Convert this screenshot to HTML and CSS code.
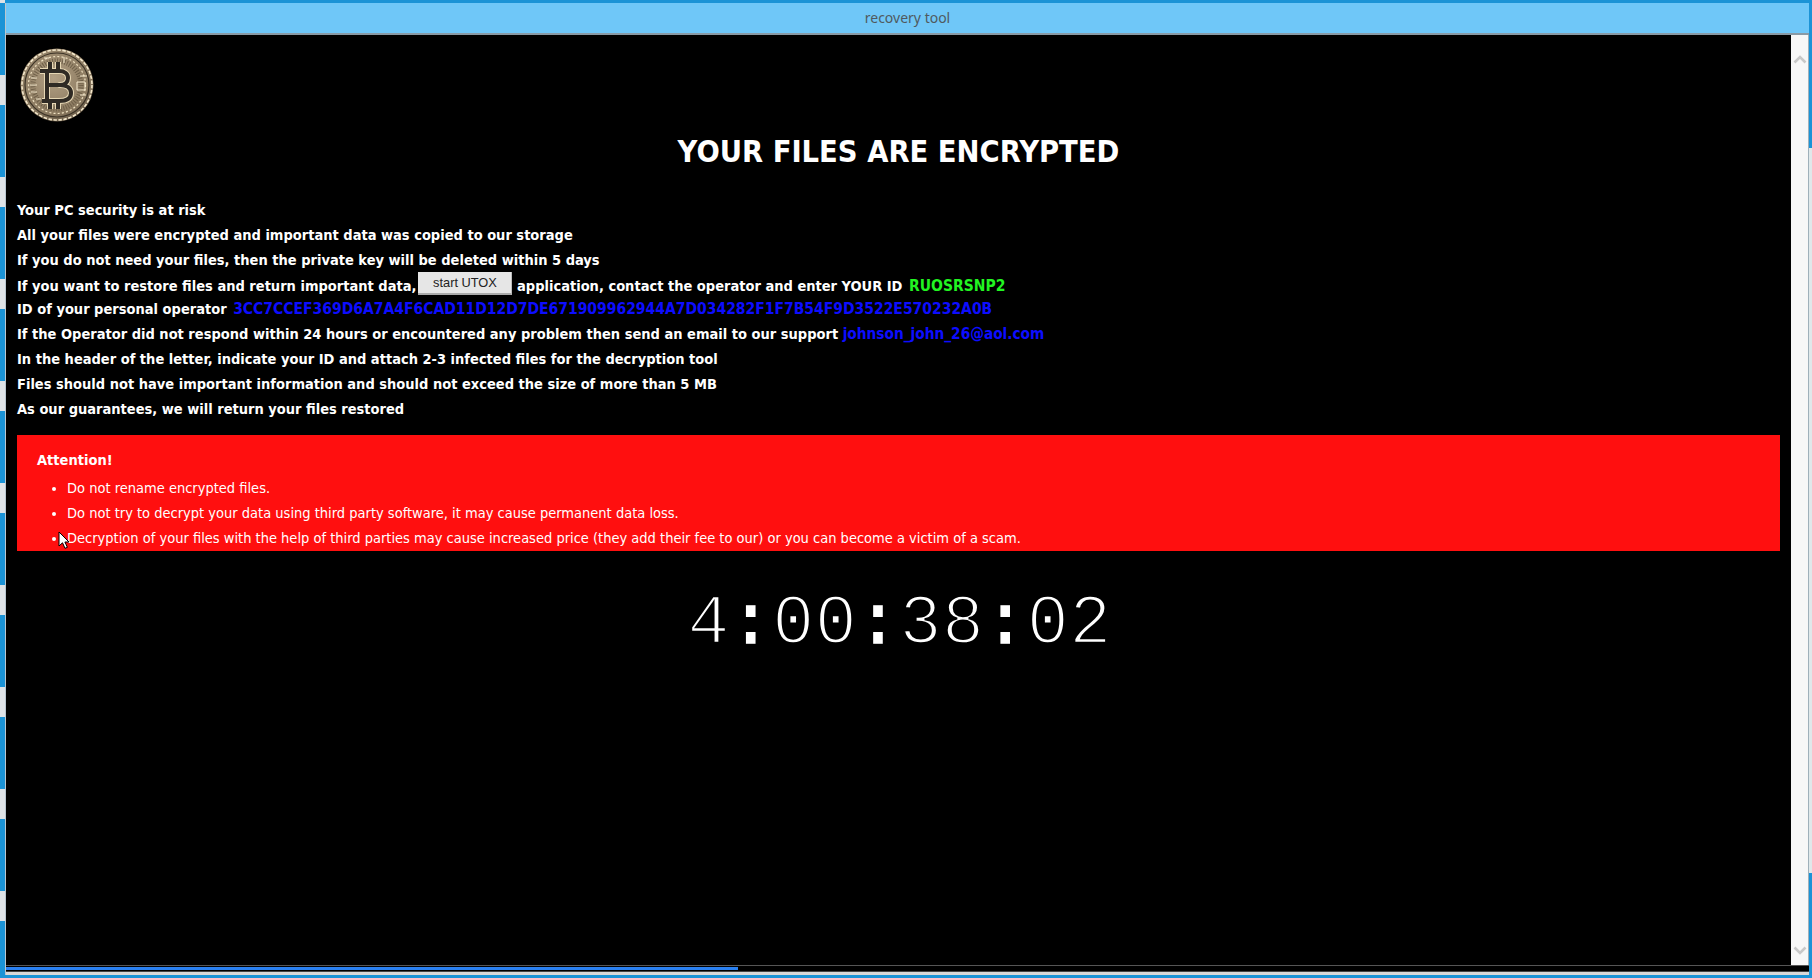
FILE: index.html
```html
<!DOCTYPE html>
<html lang="en">
<head>
<meta charset="utf-8">
<title>recovery tool</title>
<link rel="stylesheet" href="styles.css">
</head>
<body>
<div class="window">
  <header class="titlebar">recovery tool</header>
  <div class="client">
    <main class="content">
      <svg class="coin" width="74" height="74" viewBox="0 0 74 74" aria-hidden="true">
        <defs>
          <radialGradient id="coinfill" cx="45%" cy="40%" r="65%">
            <stop offset="0" stop-color="#b3a084"/>
            <stop offset="0.75" stop-color="#8b7a60"/>
            <stop offset="1" stop-color="#5d5040"/>
          </radialGradient>
        </defs>
        <circle cx="37" cy="37" r="36.500" fill="url(#coinfill)"/>
        <circle cx="37" cy="37" r="35" fill="none" stroke="#f4e8cc" stroke-width="1.600" stroke-dasharray="3.500 1.500"/>
        <circle cx="37" cy="37" r="32" fill="none" stroke="#3d3427" stroke-width="1.200"/>
        <circle cx="37" cy="37" r="28.500" fill="none" stroke="#f0e2c2" stroke-width="1.200" stroke-dasharray="2 2.200"/>
        <circle cx="37" cy="37" r="24" fill="none" stroke="#6f6049" stroke-width="5" stroke-dasharray="1 1.500"/>
        <g stroke="#e6d7b4" stroke-width="6" fill="none" stroke-linejoin="round">
          <path d="M30 14v9M38 14v9M30 53v8M38 53v8"/>
          <path d="M20 23h19c6 0 9 3 9 7s-3 7-8 7c7 0 11 3 11 8s-4 8-12 8H22"/>
          <path d="M27 23v30"/>
        </g>
        <g stroke="#2f2a24" stroke-width="4" fill="none">
          <path d="M30 14v9M38 14v9M30 53v8M38 53v8"/>
          <path d="M20 23h19c6 0 9 3 9 7s-3 7-8 7c7 0 11 3 11 8s-4 8-12 8H22"/>
          <path d="M27 23v30M27 37h13"/>
        </g>
        <g stroke="#f4e8cc" stroke-width="1" fill="none">
          <path d="M57 34h8v8h-8zM60 28h7M60 47h6M24 10h5M44 9v6"/>
          <path d="M11 30h6M10 37h7M11 44h6M16 51h5"/>
        </g>
      </svg>
      <h1 class="headline">YOUR FILES ARE ENCRYPTED</h1>
      <div class="message">
        <p class="line">Your PC security is at risk</p>
        <p class="line">All your files were encrypted and important data was copied to our storage</p>
        <p class="line">If you do not need your files, then the private key will be deleted within 5 days</p>
        <p class="line line-button">If you want to restore files and return important data,<button class="start" type="button">start UTOX</button> application, contact the operator and enter YOUR ID <span class="green">RUOSRSNP2</span></p>
        <p class="line">ID of your personal operator <span class="hex">3CC7CCEF369D6A7A4F6CAD11D12D7DE671909962944A7D034282F1F7B54F9D3522E570232A0B</span></p>
        <p class="line">If the Operator did not respond within 24 hours or encountered any problem then send an email to our support <span class="mail">johnson_john_26@aol.com</span></p>
        <p class="line">In the header of the letter, indicate your ID and attach 2-3 infected files for the decryption tool</p>
        <p class="line">Files should not have important information and should not exceed the size of more than 5 MB</p>
        <p class="line">As our guarantees, we will return your files restored</p>
      </div>
      <section class="attention">
        <h2 class="attention-title">Attention!</h2>
        <ul class="rules">
          <li>Do not rename encrypted files.</li>
          <li>Do not try to decrypt your data using third party software, it may cause permanent data loss.</li>
          <li>Decryption of your files with the help of third parties may cause increased price (they add their fee to our) or you can become a victim of a scam.</li>
        </ul>
        <svg class="cursor" width="12" height="18" viewBox="0 0 12 18" aria-hidden="true"><path d="M1 1v14l3.500-3.200 2.500 5.500 2.400-1-2.500-5.300H11z" fill="#fff" stroke="#000"/></svg>
      </section>
      <div class="timer">4<span class="sep">:</span>00<span class="sep">:</span>38<span class="sep">:</span>02</div>
    </main>
    <aside class="vscroll">
      <svg width="14" height="10" viewBox="0 0 14 10" aria-hidden="true"><path d="M1.500 8.500L7 3l5.500 5.500" fill="none" stroke="#c8c8c8" stroke-width="2.600"/></svg>
      <svg width="14" height="10" viewBox="0 0 14 10" aria-hidden="true"><path d="M1.500 1.500L7 7l5.500-5.500" fill="none" stroke="#c8c8c8" stroke-width="2.600"/></svg>
    </aside>
  </div>
  <div class="hscroll"><div class="hthumb"></div></div>
</div>
</body>
</html>
```
FILE: styles.css
```css
* { box-sizing: border-box; }
html, body { margin: 0; height: 100%; }
body {
  overflow: hidden;
  background-color: #1b93d6;
  background-image:
    linear-gradient(#1b93d6 0 40px, #dfe3e6 40px 70px, #1b93d6 70px),
    linear-gradient(#1b93d6 0 148px, #dfe8ea 148px 873px, #1b93d6 873px);
  background-size: 5px 102px, 3px 100%;
  background-position: 0 35px, 100% 0;
  background-repeat: repeat-y, no-repeat;
}
.window {
  height: 972px;
  margin: 3px 3px 0 5px;
  display: flex;
  flex-direction: column;
  background: #000;
  border-left: 1px solid #b9c6cf;
}
.titlebar {
  height: 32px;
  flex: none;
  background: #6fc7f8;
  border-bottom: 2px solid #8a9aa5;
  color: #505a60;
  font: 14px/30px "Noto Sans", sans-serif;
  text-align: center;
}
.client { flex: 1; min-height: 0; display: flex; }
.content {
  flex: 1;
  min-width: 0;
  background: #000;
  color: #fff;
  padding: 13px 11px 0 11px;
  font-family: "DejaVu Sans", "Noto Sans", sans-serif;
  font-stretch: condensed;
}
.coin { display: block; margin: 0 0 0 3px; }
.headline {
  margin: 10px 0 0;
  font-size: 30.500px;
  line-height: 40px;
  font-weight: 700;
  text-align: center;
}
.message { margin-top: 26px; }
.line {
  margin: 0;
  height: 25px;
  font-size: 14.500px;
  line-height: 25px;
  font-weight: 700;
  white-space: nowrap;
}
.line-button { margin-top: -1px; }
.start {
  display: inline-block;
  width: 94px;
  height: 23px;
  margin: 0 0 0 2px;
  padding: 0;
  vertical-align: 4px;
  background: #e6e6e6;
  border: none;
  border-right: 1px solid #bbb;
  border-bottom: 2px solid #aaa;
  color: #222;
  font: 12.800px/21px "Liberation Sans", sans-serif;
  font-stretch: normal;
}
.green { color: #22f522; font-size: 15.500px; margin-left: 2px; }
.hex { color: #0d0dff; font-size: 15.500px; margin-left: 2px; }
.mail { color: #0d0dff; font-size: 15.250px; }
.attention {
  position: relative;
  margin-top: 13px;
  height: 116px;
  background: #ff0f0f;
  padding: 13px 20px 0;
  overflow: hidden;
}
.attention-title { margin: 0; font-size: 14.500px; line-height: 25px; font-weight: 700; }
.rules { margin: 3px 0 0; padding: 0 0 0 30px; list-style: disc; }
.rules li { font-size: 14.500px; line-height: 25px; white-space: nowrap; }
.cursor { position: absolute; left: 41px; top: 96px; }
.timer {
  margin-top: 28px;
  padding-left: 2px;
  font: 70px/92px "Liberation Mono", monospace;
  font-stretch: normal;
  letter-spacing: 0.400px;
  text-align: center;
  -webkit-text-stroke: 2.400px #000;
}
.sep { -webkit-text-stroke: 1.500px #fff; }
.vscroll {
  width: 18px;
  flex: none;
  background: #f7f7f7;
  border-right: 1px solid #9fb0ba;
  display: flex;
  flex-direction: column;
  justify-content: space-between;
  align-items: center;
  padding: 19px 0 9px;
}
.hscroll {
  height: 10px;
  flex: none;
  background: linear-gradient(#000 0 5px, #444 5px 6px, #000 6px);
  border-top: 1px solid #555;
  border-bottom: 3px solid #d8d8d8;
}
.hthumb { width: 732px; height: 3px; margin-top: 1px; background: #2a80f0; }
```
